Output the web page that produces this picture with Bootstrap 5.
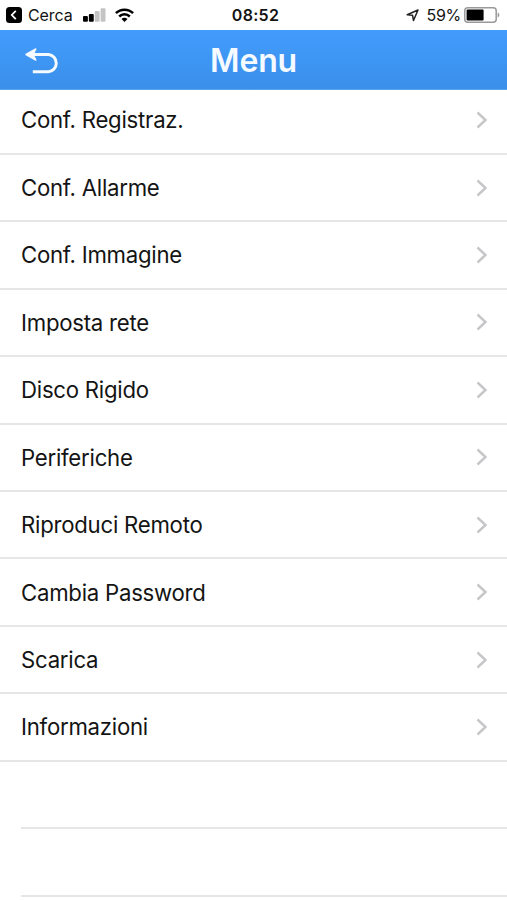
<!DOCTYPE html>
<html lang="it">
<head>
<meta charset="utf-8">
<meta name="viewport" content="width=device-width, initial-scale=1">
<title>Menu</title>
<link href="https://cdn.jsdelivr.net/npm/bootstrap@5.3.0/dist/css/bootstrap.min.css" rel="stylesheet">
<style>
body{font-family:Inter,"Liberation Sans",sans-serif;color:#141414;background:#fff}
.screen{height:900px}
.status{height:30px;font-size:16px;line-height:30px;padding:0 7px 0 6px}
.status svg,.titlebar svg,.menu-row svg{display:block;flex:none}
.clock{font-weight:600;letter-spacing:.3px;padding-left:5px}
.cerca{margin-left:6px;letter-spacing:-.1px}
.bars{margin:0 0 1px 10.5px}
.wifi{margin:0 0 1px 9px}
.arrow{margin-right:8px}
.pct{letter-spacing:-.3px;margin-right:3px}
.titlebar{height:60px;background:linear-gradient(#429cfd,#3a8fe9);z-index:2;border-bottom:1px solid #5ba3ea}
.titlebar h1{font-size:32px;font-weight:600;line-height:60px;letter-spacing:-.2px;padding-top:1px;color:#f4faff}
.back svg{margin:0 0 0 24.5px}
.menu-list{margin-top:-2.6px}
.menu-row{height:67.45px;padding:0 19px 0 21px;border:0;border-bottom:2px solid #e6e6e8;font-size:22.2px;letter-spacing:-.25px;color:#141414;background:#fff}
.empty-row{height:67.45px;margin-left:21px;border-bottom:2px solid #e6e6e8}
</style>
<script src="https://cdn.jsdelivr.net/npm/bootstrap@5.3.0/dist/js/bootstrap.bundle.min.js"></script>
</head>
<body>
<div class="screen overflow-hidden">
  <header class="status row g-0 align-items-center">
    <div class="col d-flex align-items-center">
      <svg width="16" height="16" viewBox="0 0 16 16"><rect width="16" height="16" rx="3.5" fill="#000"/><path d="M9.8 3.8 5.8 8l4 4.2" fill="none" stroke="#fff" stroke-width="1.8"/></svg>
      <span class="cerca">Cerca</span>
      <svg class="bars" width="22.500" height="14" viewBox="0 0 23 14"><rect x="0" y="8" width="5" height="6" rx="1"/><rect x="6" y="6" width="5" height="8" rx="1"/><rect x="12" y="3" width="5" height="11" rx="1" fill="#c4c4c4"/><rect x="18" y="0" width="5" height="14" rx="1" fill="#c4c4c4"/></svg>
      <svg class="wifi" width="19" height="14" viewBox="0 0 19 14"><g fill="none" stroke="#000" stroke-width="2.5"><path d="M.9 5.2a12.2 12.2 0 0 1 17.2 0"/><path d="M4.2 8.5a7.5 7.5 0 0 1 10.6 0"/></g><path d="M6.5 10.9a4.2 4.2 0 0 1 6 0l-3 3z"/></svg>
    </div>
    <div class="col-auto clock">08:52</div>
    <div class="col d-flex align-items-center justify-content-end">
      <svg class="arrow" width="13" height="13" viewBox="0 0 13 13"><path d="M12 1 1.200 5.700l5.300.5 1 5.300z" fill="none" stroke="#222" stroke-width="1.5" stroke-linejoin="round"/></svg>
      <span class="pct">59%</span>
      <svg width="36" height="16" viewBox="0 0 36 16"><rect x=".8" y=".8" width="31.4" height="14.4" rx="3" fill="#fff" stroke="#999" stroke-width="1.5"/><rect x="2.6" y="2.6" width="17" height="10.8" rx="1"/><path d="M33.7 5.500c2.200.7 2.200 4.300 0 5z" fill="#999"/></svg>
    </div>
  </header>
  <nav class="titlebar position-relative row g-0 align-items-center">
    <div class="col"><div class="back"><svg width="35" height="28" viewBox="0 0 35 28"><path d="M4 7.500H23.500a8.700 8.700 0 0 1 0 17.300H7.800" fill="none" stroke="#f4faff" stroke-width="3"/><path d="M1 7.500 10.800 2 8 7.500 10.800 13z" fill="#f4faff" stroke="#f4faff" stroke-width="1.500" stroke-linejoin="round"/></svg></div></div>
    <h1 class="col-auto mb-0">Menu</h1>
    <div class="col"></div>
  </nav>
  <main class="menu-list list-group list-group-flush rounded-0">
    <a class="menu-row text-decoration-none d-flex align-items-center justify-content-between">Conf. Registraz.<svg width="13" height="20" viewBox="0 0 13 20"><path d="m2.500 2.500 8 7.500-8 7.500" fill="none" stroke="#c6c6c9" stroke-width="2.400"/></svg></a>
    <a class="menu-row text-decoration-none d-flex align-items-center justify-content-between">Conf. Allarme<svg width="13" height="20" viewBox="0 0 13 20"><path d="m2.500 2.500 8 7.500-8 7.500" fill="none" stroke="#c6c6c9" stroke-width="2.400"/></svg></a>
    <a class="menu-row text-decoration-none d-flex align-items-center justify-content-between">Conf. Immagine<svg width="13" height="20" viewBox="0 0 13 20"><path d="m2.500 2.500 8 7.500-8 7.500" fill="none" stroke="#c6c6c9" stroke-width="2.400"/></svg></a>
    <a class="menu-row text-decoration-none d-flex align-items-center justify-content-between">Imposta rete<svg width="13" height="20" viewBox="0 0 13 20"><path d="m2.500 2.500 8 7.500-8 7.500" fill="none" stroke="#c6c6c9" stroke-width="2.400"/></svg></a>
    <a class="menu-row text-decoration-none d-flex align-items-center justify-content-between">Disco Rigido<svg width="13" height="20" viewBox="0 0 13 20"><path d="m2.500 2.500 8 7.500-8 7.500" fill="none" stroke="#c6c6c9" stroke-width="2.400"/></svg></a>
    <a class="menu-row text-decoration-none d-flex align-items-center justify-content-between">Periferiche<svg width="13" height="20" viewBox="0 0 13 20"><path d="m2.500 2.500 8 7.500-8 7.500" fill="none" stroke="#c6c6c9" stroke-width="2.400"/></svg></a>
    <a class="menu-row text-decoration-none d-flex align-items-center justify-content-between">Riproduci Remoto<svg width="13" height="20" viewBox="0 0 13 20"><path d="m2.500 2.500 8 7.500-8 7.500" fill="none" stroke="#c6c6c9" stroke-width="2.400"/></svg></a>
    <a class="menu-row text-decoration-none d-flex align-items-center justify-content-between">Cambia Password<svg width="13" height="20" viewBox="0 0 13 20"><path d="m2.500 2.500 8 7.500-8 7.500" fill="none" stroke="#c6c6c9" stroke-width="2.400"/></svg></a>
    <a class="menu-row text-decoration-none d-flex align-items-center justify-content-between">Scarica<svg width="13" height="20" viewBox="0 0 13 20"><path d="m2.500 2.500 8 7.500-8 7.500" fill="none" stroke="#c6c6c9" stroke-width="2.400"/></svg></a>
    <a class="menu-row text-decoration-none d-flex align-items-center justify-content-between">Informazioni<svg width="13" height="20" viewBox="0 0 13 20"><path d="m2.500 2.500 8 7.500-8 7.500" fill="none" stroke="#c6c6c9" stroke-width="2.400"/></svg></a>
    <div class="empty-row"></div>
    <div class="empty-row"></div>
  </main>
</div>
</body>
</html>
